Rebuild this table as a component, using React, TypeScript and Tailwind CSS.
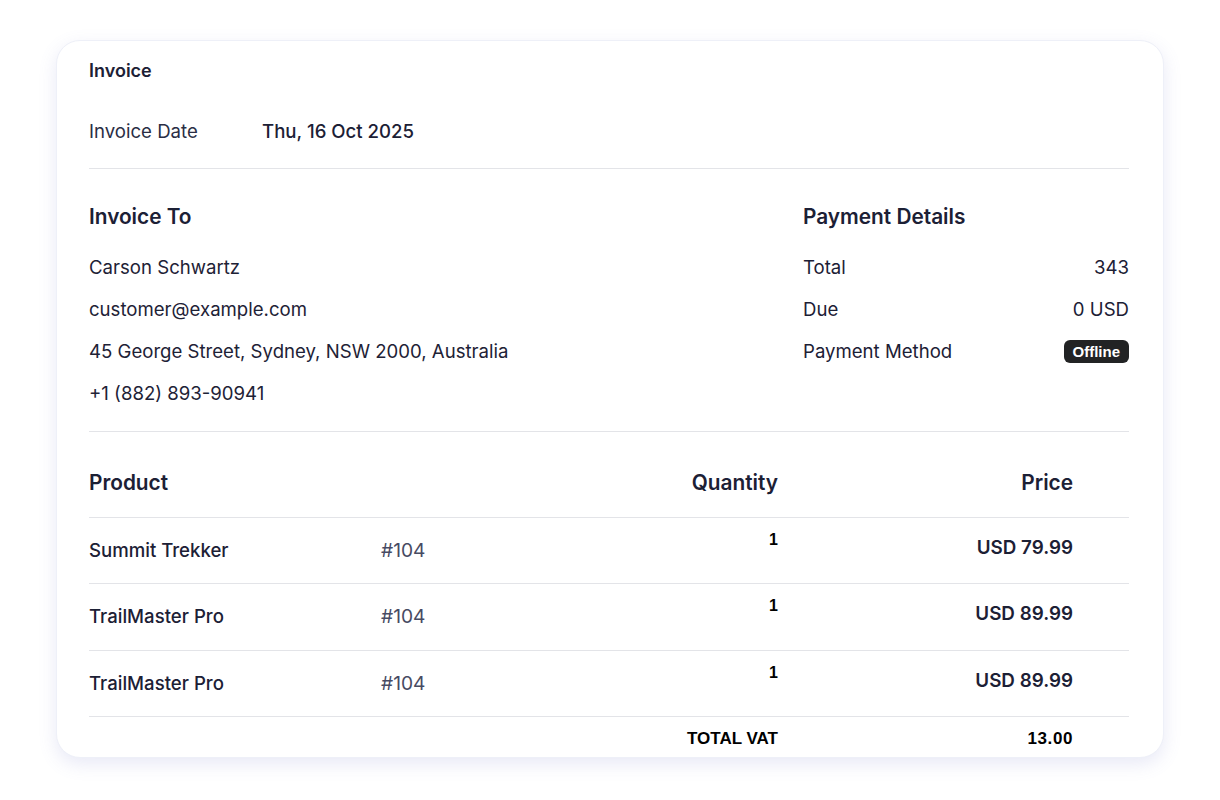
import React from "react";

const rows = [
  { name: "Summit Trekker", code: "#104", qty: "1", price: "USD 79.99", h: "h-[66px]" },
  { name: "TrailMaster Pro", code: "#104", qty: "1", price: "USD 89.99", h: "h-[67px]" },
  { name: "TrailMaster Pro", code: "#104", qty: "1", price: "USD 89.99", h: "h-[66px]" },
];

export default function App() {
  return (
    <div className="min-h-[800px] w-[1220px] bg-white pt-[40px] font-['Inter',sans-serif] text-[#1c2035]">
      <div className="ml-[56px] w-[1108px] rounded-[24px] border border-[#eef0f8] bg-white pl-[32px] pr-[34px] pt-[18px] pb-[8px] shadow-[0_6px_18px_rgba(110,120,200,0.16)]">
        <div className="text-[18px] font-semibold leading-[24px]">Invoice</div>
        <div className="mt-[34px] flex text-[18.6px] leading-[28px]">
          <div className="w-[173px] text-[#2a2e45]">Invoice Date</div>
          <div className="font-medium">Thu, 16 Oct 2025</div>
        </div>
        <div className="mt-[23px] border-t border-[#e3e4e8]" />

        <div className="flex pt-[34px]">
          <div className="w-[714px]">
            <div className="text-[20.8px] font-semibold leading-[28px]">Invoice To</div>
            <div className="mt-[22px] flex flex-col gap-[14px] text-[18.6px] leading-[28px] text-[#1e2236]">
              <div>Carson Schwartz</div>
              <div>customer@example.com</div>
              <div>45 George Street, Sydney, NSW 2000, Australia</div>
              <div>+1 (882) 893-90941</div>
            </div>
          </div>
          <div className="flex-1">
            <div className="text-[20.8px] font-semibold leading-[28px]">Payment Details</div>
            <div className="mt-[22px] flex flex-col gap-[14px] text-[18.6px] leading-[28px]">
              <div className="flex justify-between">
                <span>Total</span>
                <span>343</span>
              </div>
              <div className="flex justify-between">
                <span>Due</span>
                <span>0 USD</span>
              </div>
              <div className="flex items-center justify-between">
                <span>Payment Method</span>
                <span className="rounded-[6px] bg-[#222324] px-[9px] font-['Liberation_Sans',Arial,sans-serif] text-[15px] font-bold leading-[23px] text-white">
                  Offline
                </span>
              </div>
            </div>
          </div>
        </div>
        <div className="mt-[24px] border-t border-[#e3e4e8]" />

        <div className="flex h-[86px] items-start border-b border-[#e3e4e8] pt-[37px] text-[20.8px] font-semibold leading-[28px]">
          <div className="w-[292px]">Product</div>
          <div className="w-[219px]" />
          <div className="w-[178px] text-right">Quantity</div>
          <div className="flex-1 pr-[56px] text-right">Price</div>
        </div>

        {rows.map((r, i) => (
          <div key={i} className={`flex ${r.h} border-b border-[#e3e4e8]`}>
            <div className="w-[292px] pt-[20px] text-[18.6px] font-medium leading-[24px]">{r.name}</div>
            <div className="w-[219px] pt-[20px] text-[19.2px] leading-[24px] text-[#474b63]">{r.code}</div>
            <div className="w-[178px] pt-[12px] text-right font-['Liberation_Sans',Arial,sans-serif] text-[16px] font-bold leading-[20px] text-black">
              {r.qty}
            </div>
            <div className="flex-1 pr-[56px] pt-[18px] text-right text-[18.8px] font-semibold leading-[24px]">{r.price}</div>
          </div>
        ))}

        <div className="flex h-[32px] pt-[12px] font-['Liberation_Sans',Arial,sans-serif] text-[17px] font-bold leading-[20px] text-black">
          <div className="w-[292px]" />
          <div className="w-[219px]" />
          <div className="w-[178px] text-right">TOTAL VAT</div>
          <div className="flex-1 pr-[56px] text-right tracking-[0.6px]">13.00</div>
        </div>
      </div>
    </div>
  );
}
